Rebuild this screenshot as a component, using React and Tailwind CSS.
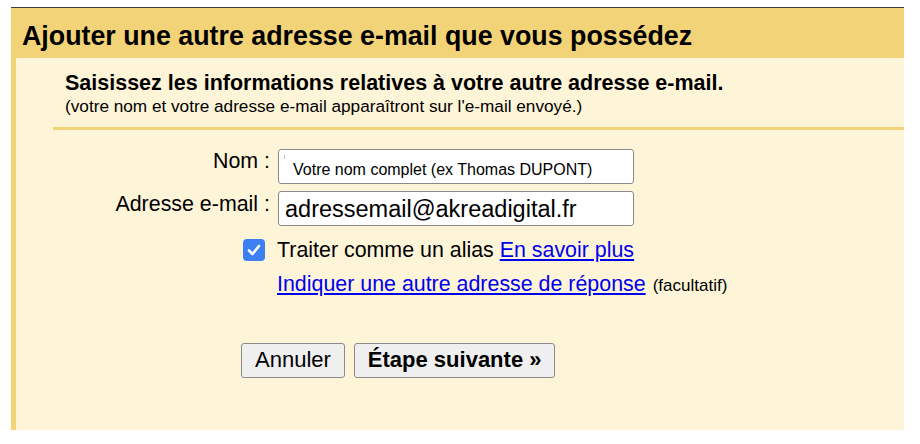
export default function App() {
  const font = { fontFamily: '"Liberation Sans", Arial, sans-serif' };
  return (
    <div className="w-[920px] h-[444px] bg-white pt-[7px] pl-[11px]" style={font}>
      <div className="w-[893px] border-t-[1.5px] border-[#3c4043]">
        <div className="h-[50px] bg-[#f3d377] pl-[11px] pt-[11px]">
          <h1 className="text-[26.8px] leading-[34px] font-bold text-black">
            Ajouter une autre adresse e-mail que vous possédez
          </h1>
        </div>
        <div className="h-[372px] bg-[#fef5d8] border-l-[5px] border-[#f3d377]">
          <div className="pl-[49px] pt-[12px]">
            <div className="text-[21.5px] leading-[26px] font-bold text-black">
              Saisissez les informations relatives à votre autre adresse e-mail.
            </div>
            <div className="text-[17.2px] leading-[20px] text-black">
              (votre nom et votre adresse e-mail apparaîtront sur l'e-mail envoyé.)
            </div>
          </div>
          <div className="ml-[37px] mt-[11px] h-[3px] bg-[#f3d377]" />
          <div className="mt-[19px] flex flex-col">
            <div className="flex items-start">
              <div className="w-[262px] text-right text-[21.4px] leading-[24px] pt-[0px] pr-[8px]">Nom :</div>
              <div className="relative w-[356px] h-[35px] bg-white border border-[#8a8a8a] rounded-[3px] flex items-center pl-[14px] pt-[6px]">
                <span className="absolute left-[5px] top-[5px] w-px h-[4px] bg-[#bbb]" />
                <span className="text-[16px] leading-[18px] text-black">Votre nom complet (ex Thomas DUPONT)</span>
              </div>
            </div>
            <div className="flex items-start mt-[7px]">
              <div className="w-[262px] text-right text-[21.4px] leading-[24px] pt-[1px] pr-[8px]">Adresse e-mail :</div>
              <div className="w-[356px] h-[35px] bg-white border border-[#8a8a8a] rounded-[3px] flex items-center pl-[6px]">
                <span className="text-[23.5px] leading-[28px] text-black">adressemail@akreadigital.fr</span>
              </div>
            </div>
            <div className="flex items-center mt-[12px] ml-[227px]">
              <div className="w-[22px] h-[22px] rounded-[4px] bg-[#3b7ff2] flex items-center justify-center">
                <svg width="14" height="12" viewBox="0 0 14 12" fill="none">
                  <path d="M2 6.5 L5.5 10 L12 2" stroke="white" strokeWidth="2.6" strokeLinecap="round" strokeLinejoin="round" />
                </svg>
              </div>
              <span className="ml-[12px] text-[21.4px] leading-[24px] text-black">
                Traiter comme un alias <a href="#" className="text-[#0000ee] underline">En savoir plus</a>
              </span>
            </div>
            <div className="flex items-baseline mt-[10px] ml-[261px]">
              <a href="#" className="text-[21.4px] leading-[24px] text-[#0000ee] underline">Indiquer une autre adresse de réponse</a>
              <span className="ml-[7px] text-[17px] text-black">(facultatif)</span>
            </div>
            <div className="flex mt-[44px] ml-[225px] gap-[9px]">
              <button className="h-[35px] px-[13px] bg-[#efefef] border border-[#8a8a8a] rounded-[3px] text-[22px] leading-[24px] text-black">Annuler</button>
              <button className="h-[35px] px-[13px] bg-[#efefef] border border-[#8a8a8a] rounded-[3px] text-[22px] leading-[24px] font-bold text-black">Étape suivante »</button>
            </div>
          </div>
        </div>
      </div>
    </div>
  );
}
